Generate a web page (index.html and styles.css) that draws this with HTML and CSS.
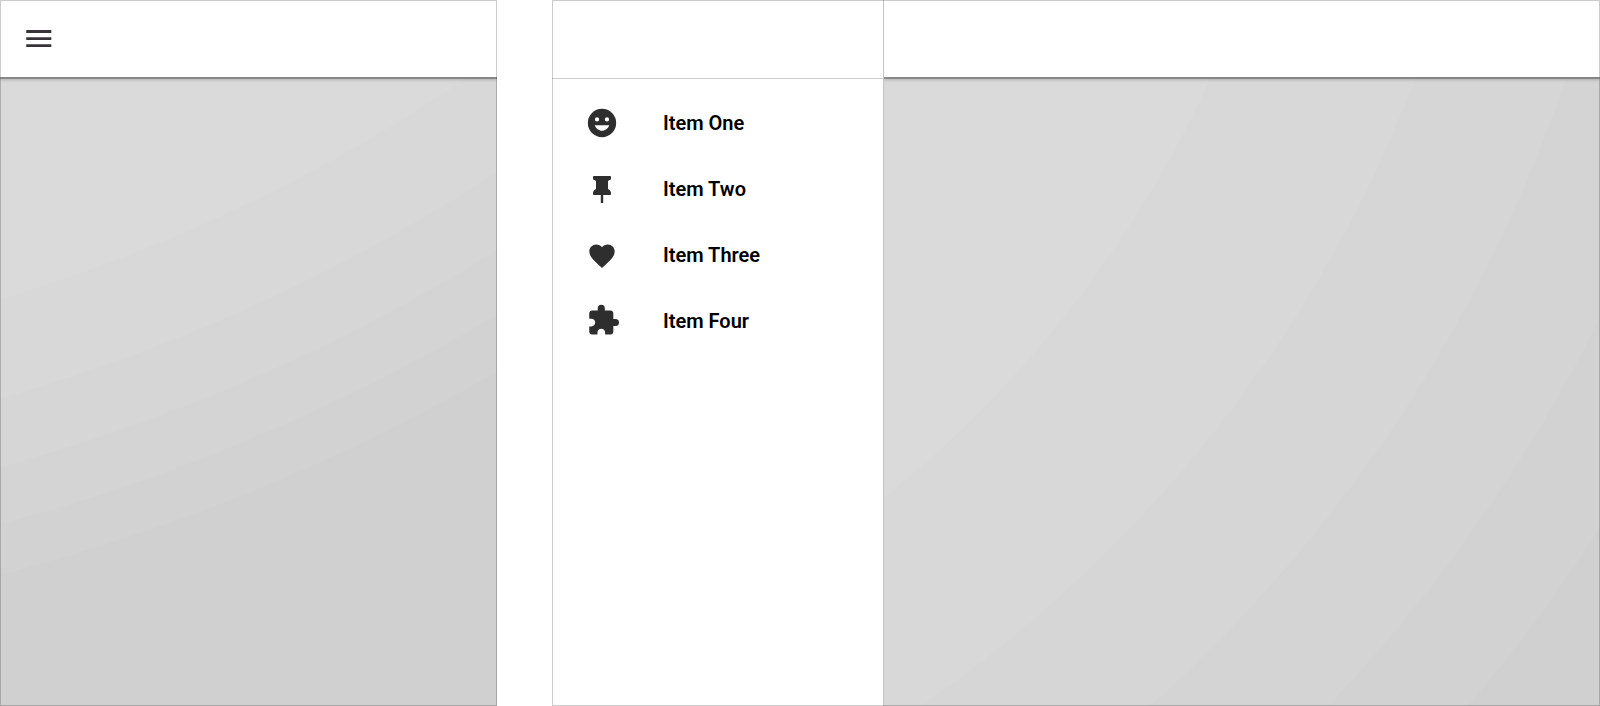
FILE: index.html
```html
<!DOCTYPE html>
<html lang="en">
<head>
<meta charset="utf-8">
<title>Navigation drawer</title>
<link rel="stylesheet" href="styles.css">
</head>
<body>
<div class="screens">
  <section class="screen" aria-label="Narrow screen">
    <div class="pane">
      <header class="toolbar">
        <button class="menu-button" type="button" aria-label="Open menu">
          <svg class="icon" viewBox="0 .3 24 24"><path d="M3 18h17.700v-2H3v2zm0-5h17.700v-2H3v2zm0-7v2h17.700V6H3z"/></svg>
        </button>
      </header>
      <main class="content content-narrow"></main>
    </div>
  </section>

  <section class="screen" aria-label="Wide screen">
    <nav class="drawer" aria-label="Main">
      <div class="drawer-header"></div>
      <ul class="drawer-list">
        <li><a class="drawer-item" href="#one">
          <svg class="icon" viewBox="0 0 24 24"><path fill-rule="evenodd" d="M12 2a10 10 0 1 0 0 20a10 10 0 1 0 0-20zM8.500 8a1.500 1.500 0 1 1 0 3a1.500 1.500 0 1 1 0-3zM15.500 8a1.500 1.500 0 1 1 0 3a1.500 1.500 0 1 1 0-3zM6.900 13.600h10.200c-.8 2.240-2.770 3.900-5.100 3.900S7.700 15.840 6.900 13.600z"/></svg>
          <span>Item One</span></a></li>
        <li><a class="drawer-item" href="#two">
          <svg class="icon" viewBox="0 0 34 34"><path d="M9 4H25Q26 4 26 5V6.500Q26 8 24.500 8L23 9V17C25 18 26 19.500 26 21V22Q26 23 25 23H18.200V31H15.800V23H9Q8 23 8 22V21C8 19.500 9 18 11 17V9L9.500 8Q8 8 8 6.500V5Q8 4 9 4Z"/></svg>
          <span>Item Two</span></a></li>
        <li><a class="drawer-item" href="#three">
          <svg class="icon" viewBox="-1.400 -2.200 26.800 26.800"><path d="M12 21.350l-1.450-1.320C5.400 15.360 2 12.280 2 8.500 2 5.420 4.420 3 7.500 3c1.740 0 3.410.81 4.500 2.090C13.090 3.810 14.760 3 16.500 3 19.580 3 22 5.420 22 8.500c0 3.780-3.400 6.860-8.550 11.540L12 21.350z"/></svg>
          <span>Item Three</span></a></li>
        <li><a class="drawer-item" href="#four">
          <svg class="icon" viewBox="-1 .4 24 24"><path d="M20.500 11H19V7c0-1.100-.9-2-2-2h-4V3.500a2.500 2.500 0 0 0-5 0V5H4c-1.100 0-2 .9-2 2v3.800h1.500c1.490 0 2.700 1.210 2.700 2.700s-1.210 2.700-2.700 2.700H2V20c0 1.100.9 2 2 2h3.800v-1.500c0-1.490 1.210-2.700 2.700-2.700s2.700 1.210 2.700 2.700V22H17c1.100 0 2-.9 2-2v-4h1.500a2.500 2.500 0 0 0 0-5z"/></svg>
          <span>Item Four</span></a></li>
      </ul>
    </nav>
    <div class="pane">
      <header class="toolbar"></header>
      <main class="content content-wide"></main>
    </div>
  </section>
</div>
</body>
</html>
```
FILE: styles.css
```css
* {
  box-sizing: border-box;
}

body {
  margin: 0;
  background: #fff;
  color: #000;
  font-family: Roboto, "Liberation Sans", sans-serif;
}

.screens {
  display: grid;
  grid-template-columns: 497fr 1048fr;
  gap: 55px;
  min-height: 100vh;
}

.screen {
  position: relative;
  display: flex;
}

/* Translucent outline drawn over the toolbar and content alike */
.screen::after {
  content: "";
  position: absolute;
  z-index: 2;
  inset: 0;
  border: 1px solid rgba(0, 0, 0, 0.2);
  pointer-events: none;
}

.pane {
  flex: 1;
  display: flex;
  flex-direction: column;
}

.toolbar {
  z-index: 1;
  display: flex;
  align-items: center;
  height: 77px;
  padding: 0 22px;
  background: #fff;
  box-shadow: 0 2px 0 rgba(0, 0, 0, 0.24), 0 3px 3px rgba(0, 0, 0, 0.2);
  clip-path: inset(0 0 -8px 0);
}

.menu-button {
  display: flex;
  padding: 0;
  border: 0;
  background: none;
  color: #373437;
  cursor: pointer;
}

.icon {
  flex: none;
  width: 34px;
  height: 34px;
  fill: currentColor;
}

.content {
  flex: 1;
}

.content-narrow {
  background: radial-gradient(circle at -495px -1421px,
    #dadada 1716px, #d8d8d8 1717px 1811px, #d6d6d6 1812px 1877px,
    #d4d4d4 1878px 1932px, #d2d2d2 1933px 1981px, #d0d0d0 1982px);
}

.content-wide {
  background: radial-gradient(circle at -723px -478px,
    #dadada 1153px, #d8d8d8 1154px 1342px, #d6d6d6 1343px 1484px,
    #d4d4d4 1485px 1608px, #d2d2d2 1609px 1712px, #d0d0d0 1713px);
}

.drawer {
  flex: none;
  width: 332px;
  border-right: 1px solid #c4c4c4;
}

.drawer-header {
  height: 79px;
  border-bottom: 1px solid #cdcdcd;
}

.drawer-list {
  margin: 0;
  padding: 11px 0;
  list-style: none;
}

.drawer-item {
  display: flex;
  align-items: center;
  gap: 44px;
  height: 66px;
  padding: 0 33px;
  color: #000;
  font-size: 20px;
  font-weight: 600;
  line-height: 24px;
  text-decoration: none;
}

.drawer-item .icon {
  color: #2e2e2e;
}
```
